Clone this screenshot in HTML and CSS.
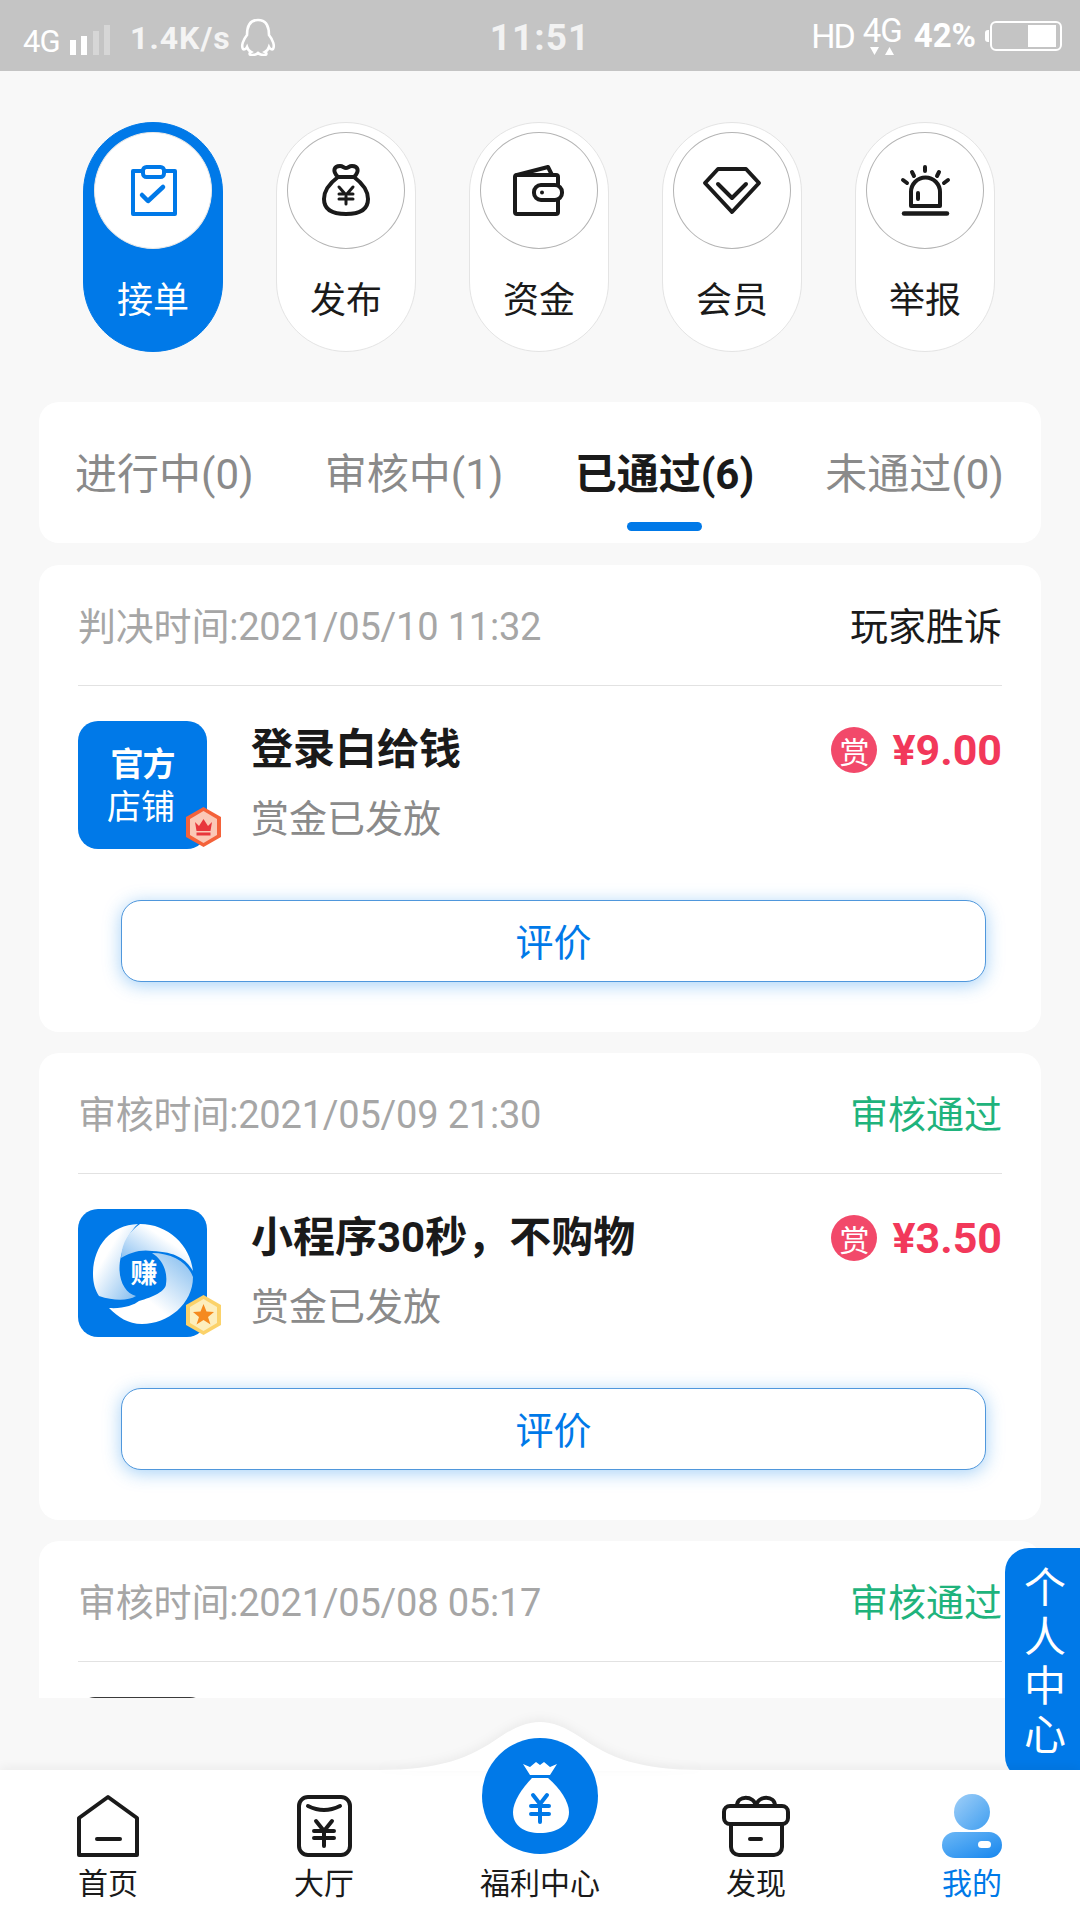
FILE: index.html
```html
<!DOCTYPE html>
<html lang="zh-CN">
<head>
    <meta charset="UTF-8">
    <meta name="viewport" content="width=device-width, initial-scale=1.0">
    <title>已通过</title>
    <link rel="stylesheet" href="styles.css">
</head>
<body>

<div class="statusbar">
    <div class="status-left">
        <span class="net">4G</span>
        <div class="signal">
            <i class="bar b1"></i><i class="bar b2"></i><i class="bar b3 dim"></i><i class="bar b4 dim"></i>
        </div>
        <span class="speed">1.4K/s</span>
        <svg class="qq" width="36" height="38" viewBox="0 0 36 38"><path d="M18 2C9 2 7 10 7 17C3 22 1 28 3 31C4 32 6 31 7 29C8 32 9 33 11 34C9 35 9 37 12 37C15 37 17 36 18 35C19 36 21 37 24 37C27 37 27 35 25 34C27 33 28 32 29 29C30 31 32 32 33 31C35 28 33 22 29 17C29 10 27 2 18 2Z" fill="none" stroke="#fff" stroke-width="2.6"/></svg>
    </div>
    <div class="clock">11:51</div>
    <div class="status-right">
        <span class="hd">HD</span>
        <div class="net-up">
            <span>4G</span>
            <svg width="24" height="9" viewBox="0 0 24 9"><path d="M0 0H9L4.5 8ZM15 8L19.5 0L24 8Z" fill="#fff"/></svg>
        </div>
        <span class="percent">42%</span>
        <div class="battery"><i class="battery-fill"></i></div>
    </div>
</div>

<div class="main">
    <div class="pills">
        <div class="pill active">
            <div class="pill-icon">
                <svg width="116" height="116" viewBox="0 0 116 116" fill="none" stroke="#0079e8" stroke-width="4" stroke-linejoin="round" stroke-linecap="round">
                    <path d="M47 38H38V81H80V38H70"/>
                    <rect x="48" y="34" width="21" height="10" rx="3.5"/>
                    <path d="M47 62L53 68L68 54" stroke-width="4.5"/>
                </svg>
            </div>
            <span>接单</span>
        </div>
        <div class="pill">
            <div class="pill-icon">
                <svg width="116" height="116" viewBox="0 0 116 116" fill="none" stroke="#1a1a1a" stroke-width="4" stroke-linejoin="round" stroke-linecap="round">
                    <path d="M50 44C44 38 46 33 52 33C55 33 56 35 58 35C60 35 61 33 64 33C70 33 72 38 66 44C74 50 80 58 80 66C80 76 72 81 58 81C44 81 36 76 36 66C36 58 42 50 50 44Z"/>
                    <path d="M50 44H66"/>
                    <path d="M51 54L58 62L65 54M51 61H65M51 66H65M58 62V71" stroke-width="3"/>
                </svg>
            </div>
            <span>发布</span>
        </div>
        <div class="pill">
            <div class="pill-icon">
                <svg width="116" height="116" viewBox="0 0 116 116" fill="none" stroke="#1a1a1a" stroke-width="4" stroke-linejoin="round" stroke-linecap="round">
                    <path d="M36 42L67 34L71 42"/>
                    <rect x="34" y="42" width="43" height="39" rx="2"/>
                    <rect x="53" y="52" width="28" height="15" rx="7" fill="#fff"/>
                    <circle cx="61" cy="59.5" r="2" fill="#1a1a1a" stroke="none"/>
                </svg>
            </div>
            <span>资金</span>
        </div>
        <div class="pill">
            <div class="pill-icon">
                <svg width="116" height="116" viewBox="0 0 116 116" fill="none" stroke="#1a1a1a" stroke-width="4" stroke-linejoin="round" stroke-linecap="round">
                    <path d="M44 36H72L85 50L58 79L31 50Z"/>
                    <path d="M44 51L58 65L72 51"/>
                </svg>
            </div>
            <span>会员</span>
        </div>
        <div class="pill">
            <div class="pill-icon">
                <svg width="116" height="116" viewBox="0 0 116 116" fill="none" stroke="#1a1a1a" stroke-width="4" stroke-linejoin="round" stroke-linecap="round">
                    <path d="M44 73V59A14.500 14.500 0 0 1 73 59V73Z"/>
                    <path d="M37 80.500H80" stroke-width="4.500"/>
                    <path d="M51 60V66"/>
                    <path d="M58 34V38M45 39L47 43M72 39L70 43M36 47L40 50M81 47L77 50"/>
                </svg>
            </div>
            <span>举报</span>
        </div>
    </div>

    <div class="tabs">
        <span class="tab">进行中(0)</span>
        <span class="tab">审核中(1)</span>
        <span class="tab active">已通过(6)<i class="tab-line"></i></span>
        <span class="tab">未通过(0)</span>
    </div>

    <div class="list">
        <div class="card">
            <div class="card-head">
                <span class="time">判决时间:2021/05/10 11:32</span>
                <span class="state">玩家胜诉</span>
            </div>
            <div class="card-body">
                <div class="thumb official">
                    <b>官方</b>
                    <span>店铺</span>
                    <svg class="hex" width="35" height="40" viewBox="0 0 35 40">
                        <polygon points="17.500,0 35,10 35,30 17.500,40 0,30 0,10" fill="#f4623a"/>
                        <polygon points="17.500,4 31,12 31,28 17.500,36 4,28 4,12" fill="#fbc8b6"/>
                        <path d="M9 15L13 19L17.500 12L22 19L26 15L24.500 24H10.500Z" fill="#e8363c"/>
                        <rect x="10.500" y="25.500" width="14" height="3" fill="#e8363c"/>
                    </svg>
                </div>
                <div class="info">
                    <div class="title">登录白给钱</div>
                    <div class="sub">赏金已发放</div>
                </div>
                <div class="reward">
                    <span class="reward-icon">赏</span>
                    <span class="price">¥9.00</span>
                </div>
            </div>
            <div class="rate-btn">评价</div>
        </div>

        <div class="card">
            <div class="card-head">
                <span class="time">审核时间:2021/05/09 21:30</span>
                <span class="state pass">审核通过</span>
            </div>
            <div class="card-body">
                <div class="thumb swirl">
                    <svg width="128" height="128" viewBox="0 0 128 128">
                        <defs>
                            <linearGradient id="bladeA" x1="0" y1="0" x2="1" y2="1"><stop offset="0.35" stop-color="#fff"/><stop offset="1" stop-color="#7db9ee"/></linearGradient>
                            <linearGradient id="bladeB" x1="0" y1="1" x2="1" y2="0"><stop offset="0" stop-color="#6bb0ee"/><stop offset="0.65" stop-color="#fff"/></linearGradient>
                            <linearGradient id="bladeC" x1="1" y1="0" x2="0" y2="1"><stop offset="0" stop-color="#7db9ee"/><stop offset="0.6" stop-color="#fff"/></linearGradient>
                        </defs>
                        <path d="M60 15C32 16 15 38 15 65C15 74 17 81 21 87C36 92 50 92 58 87C46 84 38 68 43 47C46 34 52 22 60 15Z" fill="url(#bladeA)"/>
                        <path d="M43 49C44 32 52 22 62 15C90 15 112 36 115 62C108 50 98 43 74 42C62 40 52 44 43 49Z" fill="url(#bladeB)"/>
                        <path d="M74 44C95 44 110 54 115 68C115 95 90 115 64 115C50 115 40 108 31 99C45 100 56 96 61 92C75 88 88 82 88 75C90 62 84 50 74 44Z" fill="url(#bladeC)"/>
                        <text class="swirl-text" x="66" y="74">赚</text>
                    </svg>
                    <svg class="hex" width="35" height="40" viewBox="0 0 35 40">
                        <polygon points="17.500,0 35,10 35,30 17.500,40 0,30 0,10" fill="#fbd26a"/>
                        <polygon points="17.500,4 31,12 31,28 17.500,36 4,28 4,12" fill="#fdeebd"/>
                        <path d="M17.500 9L20.500 16.500L28 17L22 22L24.500 29.500L17.500 25L10.500 29.500L13 22L7 17L14.500 16.500Z" fill="#f58a1f"/>
                    </svg>
                </div>
                <div class="info">
                    <div class="title">小程序30秒，不购物</div>
                    <div class="sub">赏金已发放</div>
                </div>
                <div class="reward">
                    <span class="reward-icon">赏</span>
                    <span class="price">¥3.50</span>
                </div>
            </div>
            <div class="rate-btn">评价</div>
        </div>

        <div class="card">
            <div class="card-head">
                <span class="time">审核时间:2021/05/08 05:17</span>
                <span class="state pass">审核通过</span>
            </div>
            <div class="card-body">
                <div class="thumb dark"></div>
            </div>
        </div>
    </div>
</div>

<div class="float-tab">个人中心</div>

<div class="nav">
    <svg class="nav-bump" width="320" height="49" viewBox="0 0 320 49"><path d="M0 48C60 48 90 36 120 15C135 5 148 0 160 0C172 0 185 5 200 15C230 36 260 48 320 48V49H0Z" fill="#fff"/></svg>
    <div class="nav-item">
        <svg width="80" height="64" viewBox="0 0 80 64" fill="none" stroke="#1a1a1a" stroke-width="4" stroke-linejoin="round" stroke-linecap="round">
            <path d="M40 3L69 24V61H11V24Z"/>
            <path d="M29 45H52"/>
        </svg>
        <span>首页</span>
    </div>
    <div class="nav-item">
        <svg width="80" height="64" viewBox="0 0 80 64" fill="none" stroke="#1a1a1a" stroke-width="4" stroke-linejoin="round" stroke-linecap="round">
            <rect x="15" y="3" width="51" height="58" rx="9"/>
            <path d="M24 12Q40 20 56 12"/>
            <path d="M32 27L40 37L48 27M30 37H50M30 44H50M40 37V52"/>
        </svg>
        <span>大厅</span>
    </div>
    <div class="nav-item center">
        <div class="nav-circle">
            <svg width="116" height="116" viewBox="0 0 116 116">
                <path d="M41 26L48 29L54 24L58 27L62 24L68 29L75 26L68 37H48Z" fill="#fff"/>
                <path d="M50 40H66C78 50 87 64 87 74C87 88 74 95 58 95C42 95 31 88 31 74C31 64 40 50 50 40Z" fill="#fff"/>
                <path d="M51 57L58 66L65 57M49 68H67M49 76H67M58 66V84" fill="none" stroke="#0079e8" stroke-width="4" stroke-linecap="round" stroke-linejoin="round"/>
            </svg>
        </div>
        <span>福利中心</span>
    </div>
    <div class="nav-item">
        <svg width="80" height="64" viewBox="0 0 80 64" fill="none" stroke="#1a1a1a" stroke-width="4" stroke-linejoin="round" stroke-linecap="round">
            <path d="M21 12C21 1 38 1 40 12C42 1 59 1 59 12"/>
            <rect x="8" y="12" width="64" height="18" rx="6"/>
            <path d="M15 30V53A8 8 0 0 0 23 61H58A8 8 0 0 0 66 53V30"/>
            <path d="M34 45H45"/>
        </svg>
        <span>发现</span>
    </div>
    <div class="nav-item mine">
        <svg width="80" height="64" viewBox="0 0 80 64">
            <defs>
                <linearGradient id="headFill" x1="0" y1="0" x2="1" y2="1"><stop offset="0" stop-color="#a0cff8"/><stop offset="1" stop-color="#3f9ef0"/></linearGradient>
                <linearGradient id="bodyFill" x1="0" y1="0" x2="1" y2="1"><stop offset="0" stop-color="#6db8f6"/><stop offset="1" stop-color="#1686ee"/></linearGradient>
            </defs>
            <circle cx="40" cy="18" r="18" fill="url(#headFill)"/>
            <rect x="10" y="38" width="60" height="26" rx="13" fill="url(#bodyFill)"/>
            <rect x="46" y="47" width="13" height="7" rx="3.500" fill="#fff"/>
        </svg>
        <span>我的</span>
    </div>
</div>

</body>
</html>
```

FILE: styles.css
```css
* {
    box-sizing: border-box;
}

body {
    margin: 0;
    width: 1080px;
    height: 1920px;
    overflow: hidden;
    position: relative;
    display: flex;
    flex-direction: column;
    background-color: #f8f8f8;
    font-family: Roboto, "Noto Sans CJK SC", sans-serif;
    color: #1a1a1a;
}

/* status bar */
.statusbar {
    height: 71px;
    flex: none;
    display: grid;
    grid-template-columns: 1fr auto 1fr;
    align-items: center;
    padding: 0 18px;
    background-color: #c4c4c4;
    color: #fff;
}

.status-left,
.status-right {
    display: flex;
    align-items: center;
}

.status-left {
    padding-left: 5px;
}

.status-right {
    justify-content: flex-end;
}

.net {
    font-size: 31px;
    margin-top: 12px;
    letter-spacing: -1px;
}

.signal {
    display: flex;
    align-items: flex-end;
    gap: 5.500px;
    height: 30px;
    margin: 8px 0 0 10px;
}

.bar {
    width: 6px;
    background-color: #fff;
}

.bar.b1 { height: 15px; }
.bar.b2 { height: 19px; }
.bar.b3 { height: 24px; }
.bar.b4 { height: 30px; }

.bar.dim {
    opacity: 0.3;
}

.speed {
    font-size: 32px;
    font-weight: 700;
    letter-spacing: 1px;
    margin: 4px 0 0 20px;
    color: #f4f4f4;
}

.qq {
    margin: 3px 0 0 9px;
}

.clock {
    font-size: 37px;
    font-weight: 700;
    letter-spacing: 1px;
    margin-top: 4px;
    color: #f2f2f2;
}

.hd {
    font-size: 34px;
    letter-spacing: -2px;
}

.net-up {
    display: flex;
    flex-direction: column;
    align-items: center;
    margin-left: 9px;
    font-size: 33px;
    line-height: 30px;
    letter-spacing: -1px;
}

.net-up svg {
    margin-top: 1px;
}

.percent {
    font-size: 33px;
    font-weight: 700;
    margin-left: 12px;
}

.battery {
    position: relative;
    width: 72px;
    height: 30px;
    margin-left: 14px;
    padding: 2px 4px;
    display: flex;
    justify-content: flex-end;
    border: 2px solid #fff;
    border-radius: 6px;
}

.battery::before {
    content: "";
    position: absolute;
    left: -7px;
    top: 7px;
    width: 4px;
    height: 12px;
    background-color: #fff;
    border-radius: 3px 0 0 3px;
}

.battery-fill {
    width: 28px;
    background-color: #fff;
}

/* top round buttons */
.main {
    flex: 1;
    min-height: 0;
}

.pills {
    display: flex;
    gap: 53px;
    padding: 51px 0 0 83px;
}

.pill {
    width: 140px;
    height: 230px;
    padding-top: 9px;
    display: flex;
    flex-direction: column;
    align-items: center;
    background-color: #fff;
    border: 1px solid #e4e4e4;
    border-radius: 70px;
    font-size: 36px;
    line-height: 50px;
}

.pill.active {
    background-color: #0079e8;
    border-color: #0079e8;
    color: #fff;
}

.pill-icon {
    width: 118px;
    height: 117px;
    flex: none;
    display: flex;
    align-items: center;
    justify-content: center;
    background-color: #fff;
    border: 1px solid #b4b4b4;
    border-radius: 50%;
    margin-bottom: 27px;
}

.pill-icon svg {
    flex: none;
}

.pill.active .pill-icon {
    border-color: #e8e8e8;
}

/* tabs */
.tabs {
    position: relative;
    height: 141px;
    margin: 50px 39px 0;
    padding: 0 37px 5px 36px;
    display: flex;
    justify-content: space-between;
    align-items: center;
    background-color: #fff;
    border-radius: 20px;
    font-size: 42px;
    color: #8a8a8a;
}

.tab {
    position: relative;
    white-space: nowrap;
}

.tab.active {
    font-weight: 700;
    color: #1a1a1a;
}

.tab-line {
    position: absolute;
    left: 50%;
    top: 82px;
    width: 75px;
    height: 9px;
    margin-left: -37px;
    background-color: #0079e8;
    border-radius: 5px;
}

/* task cards */
.list {
    height: 1155px;
    padding-top: 1px;
    overflow: hidden;
}

.card {
    height: 467px;
    margin: 21px 39px 0;
    padding: 0 39px;
    background-color: #fff;
    border-radius: 20px;
}

.card-head {
    height: 121px;
    padding-bottom: 3px;
    display: flex;
    justify-content: space-between;
    align-items: center;
    border-bottom: 1px solid #e2e2e2;
    font-size: 38px;
}

.time {
    color: #a6a6a6;
    letter-spacing: -0.2px;
}

.state.pass {
    color: #1fb37c;
}

.card-body {
    display: flex;
    align-items: flex-start;
    padding-top: 35px;
}

.thumb {
    position: relative;
    width: 129px;
    height: 128px;
    flex: none;
    border-radius: 20px;
    background-color: #0079e8;
}

.hex {
    position: absolute;
    left: 108px;
    top: 86px;
}

.official {
    display: flex;
    flex-direction: column;
    align-items: center;
    padding-top: 22px;
    color: #fff;
    font-size: 33px;
    line-height: 43px;
}

.official b {
    letter-spacing: -1px;
}

.official span {
    font-size: 34px;
    margin-right: 3px;
}

.swirl > svg:first-child {
    display: block;
}

.swirl-text {
    fill: #fff;
    font-size: 27px;
    font-weight: 700;
    text-anchor: middle;
}

.dark {
    background-color: #3a3a3a;
    border-radius: 17px;
}

.info {
    margin-left: 44px;
    flex: 1;
}

.title {
    font-size: 42px;
    font-weight: 700;
    line-height: 56px;
    margin-top: 1px;
}

.sub {
    font-size: 38px;
    line-height: 50px;
    margin-top: 16px;
    color: #8a8a8a;
}

.reward {
    display: flex;
    align-items: center;
    gap: 15px;
    margin-top: 4px;
}

.reward-icon {
    width: 46px;
    height: 46px;
    display: flex;
    align-items: center;
    justify-content: center;
    background-color: #f2496a;
    border-radius: 50%;
    color: #fff;
    font-size: 30px;
}

.price {
    font-size: 43px;
    font-weight: 700;
    color: #f2385a;
}

.rate-btn {
    height: 82px;
    margin: 51px 16px 0 43px;
    padding-bottom: 4px;
    display: flex;
    align-items: center;
    justify-content: center;
    background-color: #fff;
    border: 1px solid #4f97dc;
    border-radius: 20px;
    box-shadow: 0 3px 18px rgba(30, 140, 235, 0.4);
    font-size: 38px;
    color: #0079e8;
}

/* side tab */
.float-tab {
    position: absolute;
    top: 1548px;
    right: 0;
    width: 75px;
    height: 232px;
    padding: 16px 0 0 19px;
    background-color: #0079e8;
    border-radius: 24px 0 0 24px;
    color: #fff;
    font-size: 42px;
    line-height: 49px;
    word-break: break-all;
}

/* bottom nav */
.nav {
    position: relative;
    flex: none;
    height: 150px;
    display: grid;
    grid-template-columns: repeat(5, 216px);
    background-color: #fff;
    box-shadow: 0 -3px 10px rgba(0, 0, 0, 0.05);
    z-index: 1;
}

.nav-bump {
    position: absolute;
    left: 380px;
    top: -48px;
    filter: drop-shadow(0 -3px 5px rgba(0, 0, 0, 0.05));
}

.nav-item {
    position: relative;
    display: flex;
    flex-direction: column;
    align-items: center;
    padding-top: 24px;
    font-size: 30px;
    line-height: 36px;
}

.nav-item svg {
    display: block;
}

.nav-item span {
    margin-top: 8px;
}

.nav-item.center {
    padding-top: 0;
}

.nav-circle {
    width: 116px;
    height: 116px;
    margin-top: -32px;
    background-color: #0079e8;
    border-radius: 50%;
}

.nav-item.center span {
    margin-top: 12px;
}

.nav-item.mine {
    color: #0079e8;
}
```
